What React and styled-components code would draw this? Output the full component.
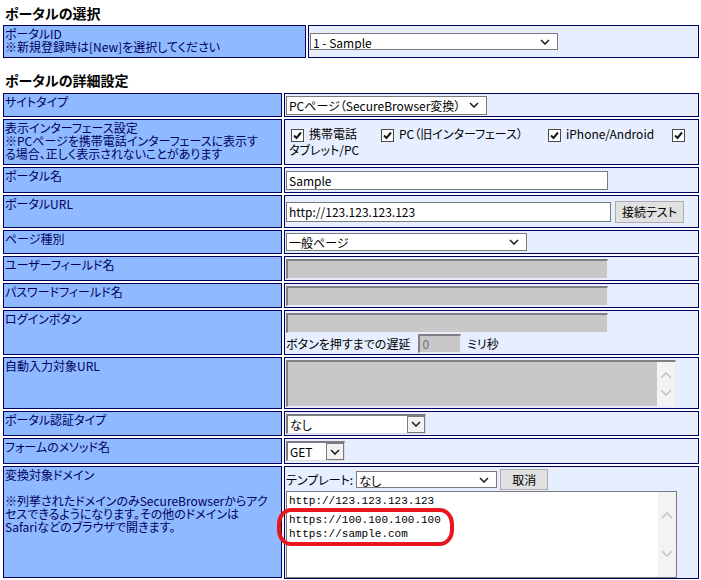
import styled, { createGlobalStyle } from "styled-components";

const FONT = `"Noto Sans CJK JP", "Liberation Sans", sans-serif`;

const Global = createGlobalStyle`
  body { margin: 0; background: #fff; }
  * { box-sizing: border-box; }
`;

const Page = styled.div`
  position: relative;
  width: 701px;
  padding: 3px 0 0 1px;
  font-family: ${FONT};
  font-size: 12px;
  font-feature-settings: "palt";
  color: #000;
`;

const Heading = styled.h2`
  margin: ${p => (p.$second ? "10px 0 1px" : "0")};
  padding-left: 4px;
  font-size: 14px;
  font-weight: bold;
  line-height: 20px;
`;

const Table = styled.div`
  display: grid;
  grid-template-columns: ${p => p.$labelW}px 1fr;
  gap: 2px;
  padding: 2px;
  width: 700px;
`;

const Label = styled.div`
  height: ${p => p.$h}px;
  padding: 1px 1px 0;
  background: #8fbaff;
  border: 1px solid #00005e;
  color: #000060;
  line-height: 13px;
  white-space: nowrap;
`;

const Value = styled.div`
  display: flex;
  flex-direction: column;
  justify-content: ${p => (p.$top ? "flex-start" : "center")};
  align-items: flex-start;
  gap: ${p => p.$gap || 0}px;
  padding: ${p => (p.$top ? "2px 1px 0" : "0 1px")};
  background: #e6eeff;
  border: 1px solid #00005e;
  min-width: 0;
`;

const Line = styled.div`
  display: flex;
  align-items: center;
  gap: ${p => p.$gap || 0}px;
  line-height: 13px;
`;

const Caption = styled.span`
  margin-right: ${p => p.$mr || 0}px;
`;

const SelectWrap = styled.span`
  position: relative;
  display: inline-flex;
  align-items: center;
  width: ${p => p.$w}px;
  height: ${p => p.$h}px;
  background: #fff;
  border: 1px solid #7a7a7a;
`;

const ClassicWrap = styled(SelectWrap)`
  border-width: 2px 1px 1px 2px;
  border-color: #7d7d7d #dcdcdc #dcdcdc #7d7d7d;
`;

const NativeSelect = styled.select`
  appearance: none;
  width: 100%;
  height: 100%;
  border: 0;
  background: transparent;
  padding: 0 0 0 2px;
  font-family: ${FONT};
  font-size: 12px;
  font-feature-settings: "palt";
  color: #000;
  outline: none;
`;

const Arrow = styled.svg`
  position: absolute;
  right: ${p => p.$r}px;
  top: 50%;
  margin-top: -3px;
  pointer-events: none;
`;

const DropButton = styled.span`
  position: absolute;
  top: 0;
  right: 0;
  bottom: 0;
  width: 18px;
  display: flex;
  align-items: center;
  justify-content: center;
  background: #f2f2f2;
  border: 1px solid #7a7a7a;
  pointer-events: none;
`;

const TextInput = styled.input`
  width: ${p => p.$w}px;
  height: ${p => p.$h}px;
  padding: 0 2px;
  border: 1px solid #7a7a7a;
  background: #fff;
  font-family: ${FONT};
  font-size: 12px;
  color: #000;
  outline: none;
`;

const GrayInput = styled(TextInput)`
  background: #c8c8c8;
  border-width: 2px 1px 1px 2px;
  border-color: #7f7f7f #ececec #ececec #7f7f7f;
  color: #6d6d6d;
`;

const Button = styled.button`
  width: ${p => p.$w}px;
  height: ${p => p.$h}px;
  padding: 0;
  border: 1px solid #adadad;
  background: #e1e1e1;
  font-family: ${FONT};
  font-size: 12px;
  font-feature-settings: "palt";
  color: #000;
`;

const Checks = styled.div`
  width: 100%;
  line-height: 16px;
`;

const CheckBox = styled.span`
  display: inline-block;
  width: 13px;
  height: 13px;
  margin: 0 5px;
  vertical-align: -2px;
  border: 1px solid #4a4a4a;
  background: #fff;
  line-height: 0;
`;

const OptText = styled.span`
  display: inline-block;
  white-space: nowrap;
  margin-right: ${p => p.$mr || 0}px;
  margin-left: ${p => p.$ml || 0}px;
`;

const Area = styled.div`
  display: flex;
  width: ${p => p.$w}px;
  height: ${p => p.$h}px;
  background: ${p => (p.$gray ? "#c8c8c8" : "#fff")};
  border: 1px solid #7a7a7a;
  ${p => p.$gray && "border-width: 2px 1px 1px 2px; border-color: #7f7f7f #ececec #ececec #7f7f7f;"}
`;

const AreaText = styled.div`
  flex: 1;
  padding: 2px 0 0 2px;
  font-family: "Liberation Mono", monospace;
  font-size: 11px;
  line-height: 14px;
  white-space: pre;
`;

const AreaLine = styled.div`
  margin-bottom: ${p => p.$mb || 0}px;
`;

const ScrollCol = styled.div`
  width: 18px;
  display: flex;
  flex-direction: column;
  justify-content: space-between;
  align-items: center;
  padding: ${p => p.$pad}px 0;
  background: #f3f3f3;
`;

const Mark = styled.div`
  position: absolute;
  left: 277px;
  top: 508px;
  width: 177px;
  height: 38px;
  border: 4px solid #e8161d;
  border-radius: 14px / 16px;
  pointer-events: none;
`;

const Chevron = ({ r = 7, color = "#222" }) => (
  <Arrow $r={r} width="10" height="6" viewBox="0 0 10 6">
    <polyline points="1,1 5,5 9,1" fill="none" stroke={color} strokeWidth="1.6" />
  </Arrow>
);

const Select = ({ w, h, value }) => (
  <SelectWrap $w={w} $h={h}>
    <NativeSelect defaultValue={value}>
      <option>{value}</option>
    </NativeSelect>
    <Chevron />
  </SelectWrap>
);

const ClassicSelect = ({ w, h, value }) => (
  <ClassicWrap $w={w} $h={h}>
    <NativeSelect defaultValue={value}>
      <option>{value}</option>
    </NativeSelect>
    <DropButton>
      <svg width="10" height="6" viewBox="0 0 10 6">
        <polyline points="1,1 5,5 9,1" fill="none" stroke="#222" strokeWidth="1.6" />
      </svg>
    </DropButton>
  </ClassicWrap>
);

const Check = () => (
  <CheckBox>
    <svg width="11" height="11" viewBox="0 0 11 11">
      <polyline points="2,5.5 4.5,8 9,2.5" fill="none" stroke="#1a1a1a" strokeWidth="2" />
    </svg>
  </CheckBox>
);

const ScrollArrows = ({ pad }) => (
  <ScrollCol $pad={pad}>
    <svg width="12" height="7" viewBox="0 0 12 7">
      <polyline points="1,6 6,1 11,6" fill="none" stroke="#c4c4c4" strokeWidth="1.6" />
    </svg>
    <svg width="12" height="7" viewBox="0 0 12 7">
      <polyline points="1,1 6,6 11,1" fill="none" stroke="#c4c4c4" strokeWidth="1.6" />
    </svg>
  </ScrollCol>
);

export default function App() {
  return (
    <Page>
      <Global />
      <Heading>ポータルの選択</Heading>
      <Table $labelW={303}>
        <Label $h={33}>
          ポータルID<br />※新規登録時は[New]を選択してください
        </Label>
        <Value>
          <Select w={248} h={17} value="1 - Sample" />
        </Value>
      </Table>

      <Heading $second>ポータルの詳細設定</Heading>
      <Table $labelW={279}>
        <Label $h={24}>サイトタイプ</Label>
        <Value>
          <Select w={201} h={19} value="PCページ（SecureBrowser変換）" />
        </Value>

        <Label $h={46}>
          表示インターフェース設定<br />
          ※PCページを携帯電話インターフェースに表示す<br />
          る場合、正しく表示されないことがあります
        </Label>
        <Value>
          <Checks>
            <Check />
            <OptText $mr={19}>携帯電話</OptText>
            <Check />
            <OptText $mr={20}>PC（旧インターフェース）</OptText>
            <Check />
            <OptText $mr={13}>iPhone/Android</OptText>
            <Check />
            <OptText $ml={3}>タブレット/PC</OptText>
          </Checks>
        </Value>

        <Label $h={26}>ポータル名</Label>
        <Value>
          <TextInput $w={322} $h={19} defaultValue="Sample" />
        </Value>

        <Label $h={33}>ポータルURL</Label>
        <Value>
          <Line $gap={4}>
            <TextInput $w={325} $h={20} defaultValue="http://123.123.123.123" />
            <Button $w={69} $h={22}>接続テスト</Button>
          </Line>
        </Value>

        <Label $h={24}>ページ種別</Label>
        <Value>
          <Select w={241} h={18} value="一般ページ" />
        </Value>

        <Label $h={25}>ユーザーフィールド名</Label>
        <Value>
          <GrayInput $w={322} $h={20} disabled />
        </Value>

        <Label $h={25}>パスワードフィールド名</Label>
        <Value>
          <GrayInput $w={322} $h={20} disabled />
        </Value>

        <Label $h={45}>ログインボタン</Label>
        <Value $gap={1}>
          <GrayInput $w={322} $h={20} disabled />
          <Line $gap={3}>
            <Caption $mr={5}>ボタンを押すまでの遅延</Caption>
            <GrayInput $w={43} $h={19} disabled defaultValue="0" />
            <Caption>&nbsp;ミリ秒</Caption>
          </Line>
        </Value>

        <Label $h={52}>自動入力対象URL</Label>
        <Value>
          <Area $w={390} $h={47} $gray>
            <AreaText />
            <ScrollArrows pad={10} />
          </Area>
        </Value>

        <Label $h={25}>ポータル認証タイプ</Label>
        <Value>
          <ClassicSelect w={140} h={20} value="なし" />
        </Value>

        <Label $h={26}>フォームのメソッド名</Label>
        <Value>
          <ClassicSelect w={59} h={20} value="GET" />
        </Value>

        <Label $h={112}>
          変換対象ドメイン<br />
          <br />
          ※列挙されたドメインのみSecureBrowserからアク<br />
          セスできるようになります。その他のドメインは<br />
          Safariなどのブラウザで開きます。
        </Label>
        <Value $top $gap={1}>
          <Line $gap={3}>
            <Caption>テンプレート:</Caption>
            <Select w={141} h={17} value="なし" />
            <Button $w={48} $h={21}>取消</Button>
          </Line>
          <Area $w={391} $h={87}>
            <AreaText>
              <AreaLine $mb={5}>http://123.123.123.123</AreaLine>
              <AreaLine>https://100.100.100.100</AreaLine>
              <AreaLine>https://sample.com</AreaLine>
            </AreaText>
            <ScrollArrows pad={20} />
          </Area>
        </Value>
      </Table>
      <Mark />
    </Page>
  );
}
